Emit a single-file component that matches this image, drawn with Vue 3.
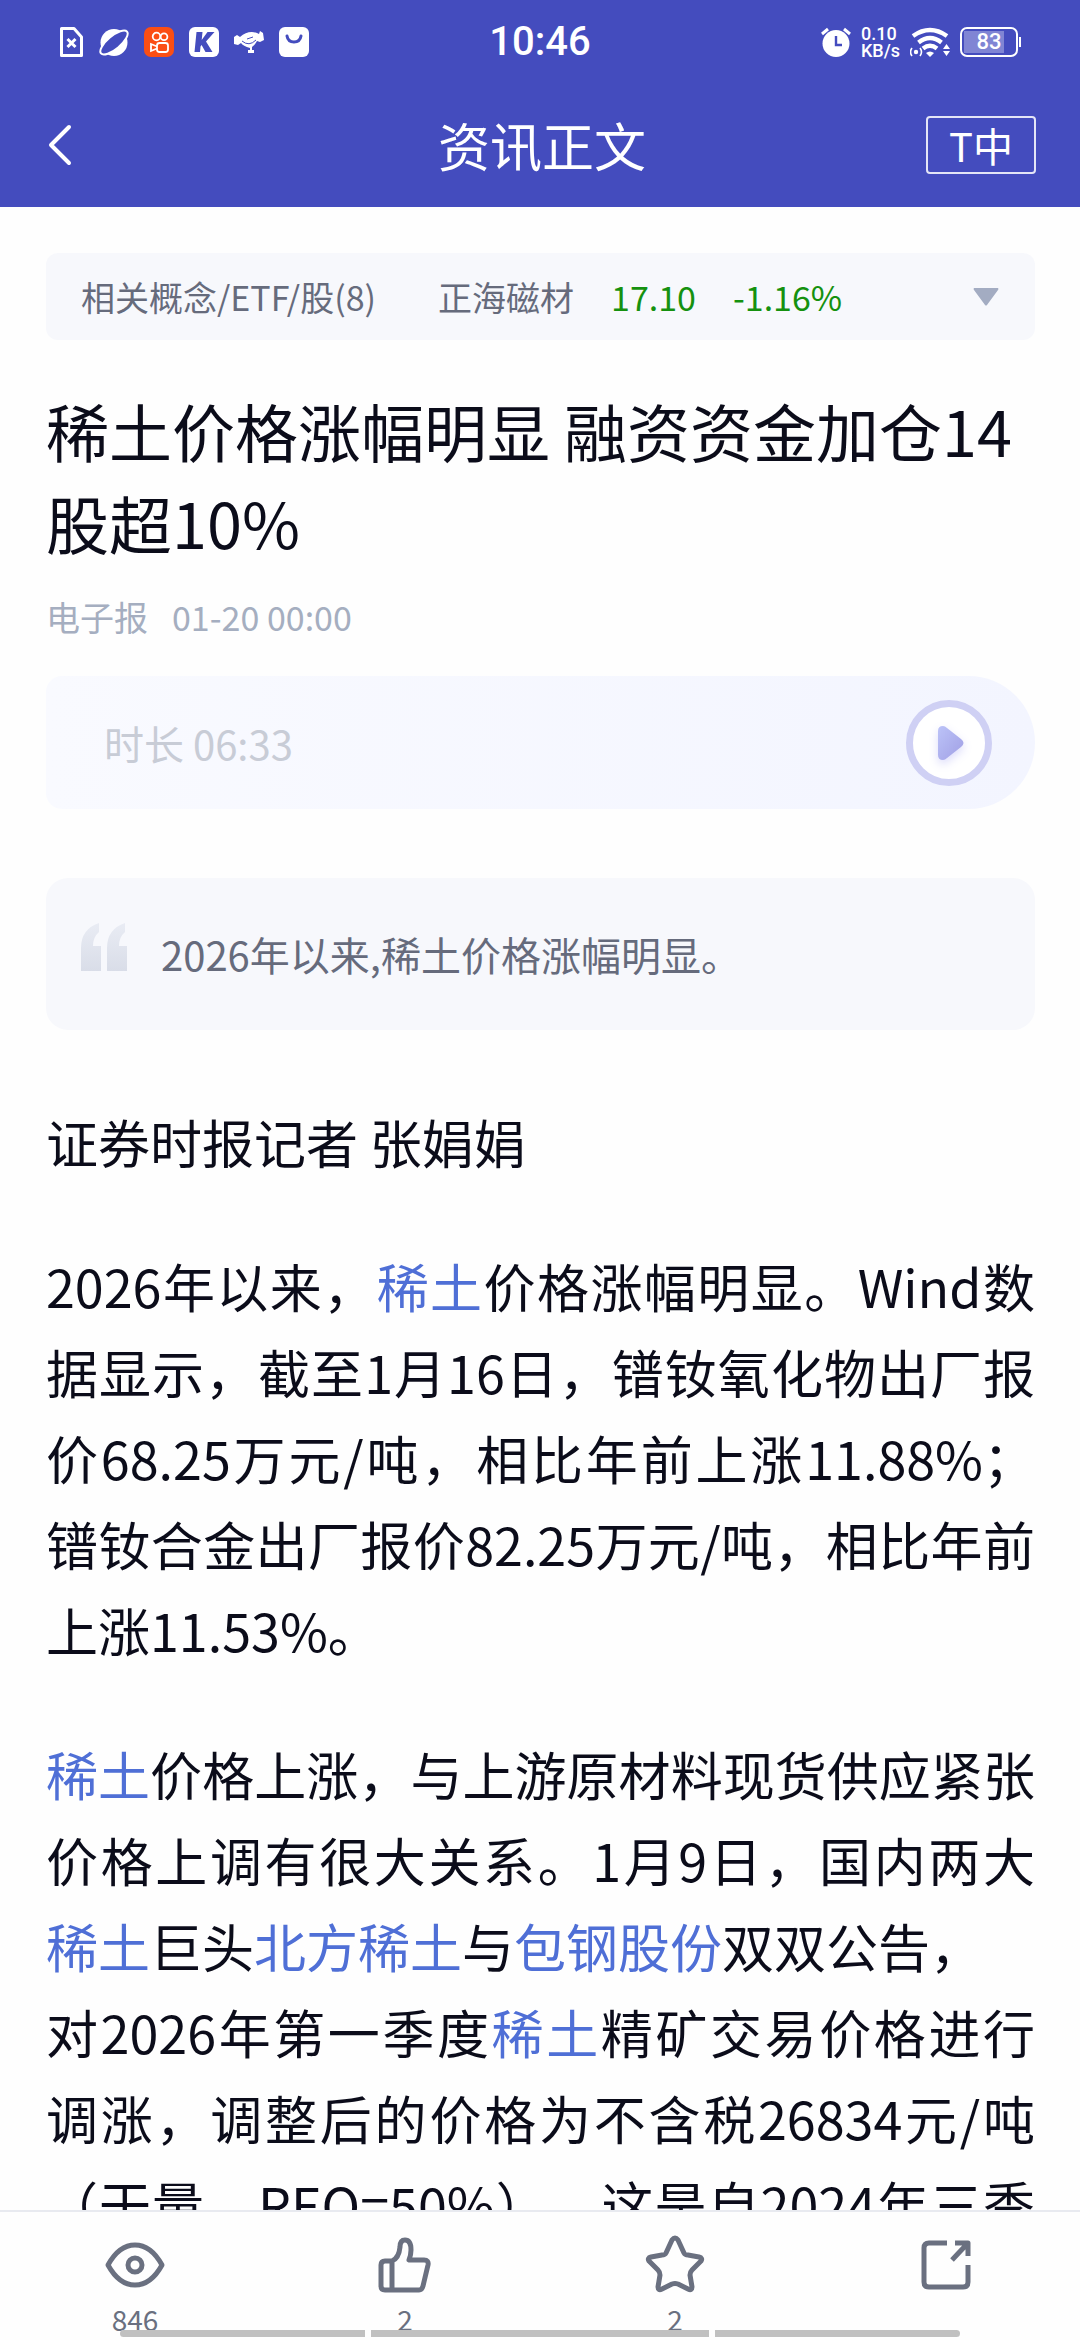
<script setup>
    import { ref } from 'vue';
    //字體大小設定
    const fontBtn = ref("T中");
    //相關股票
    const stock = ref({ name: "正海磁材", price: "17.10", change: "-1.16%" });
    //內文，link 代表可點擊的關鍵字
    const paragraphs = ref([
        [{ text: "证券时报记者 张娟娟" }],
        [
            { text: "2026年以来，" },
            { text: "稀土", link: true },
            { text: "价格涨幅明显。Wind数据显示，截至1月16日，镨钕氧化物出厂报价68.25万元/吨，相比年前上涨11.88%；镨钕合金出厂报价82.25万元/吨，相比年前上涨11.53%。" }
        ],
        [
            { text: "稀土", link: true },
            { text: "价格上涨，与上游原材料现货供应紧张价格上调有很大关系。1月9日，国内两大" },
            { text: "稀土", link: true },
            { text: "巨头" },
            { text: "北方稀土", link: true },
            { text: "与" },
            { text: "包钢股份", link: true },
            { text: "双双公告，", br: true },
            { text: "对2026年第一季度" },
            { text: "稀土", link: true },
            { text: "精矿交易价格进行调涨，调整后的价格为不含税26834元/吨（干量，REO=50%），这是自2024年三季度" }
        ]
    ]);
</script>
<template>
    <div class="page">
        <header class="header">
            <div class="status">
                <div class="statusLeft">
                    <svg viewBox="0 0 30 30">
                        <path d="M7.500 1.500H20L27.500 10V28.500H7.500Z" fill="none" stroke="#fff" stroke-width="3" stroke-linejoin="round" />
                        <path d="M13.500 12l8 8M21.500 12l-8 8" stroke="#fff" stroke-width="3" />
                    </svg>
                    <svg viewBox="0 0 30 30">
                        <circle cx="15" cy="15.500" r="13.500" fill="#fff" />
                        <ellipse cx="15" cy="15.500" rx="17" ry="6.500" transform="rotate(-40 15 15.500)" fill="#444cbe" stroke="#fff" stroke-width="2" />
                    </svg>
                    <svg viewBox="0 0 30 30">
                        <rect width="30" height="30" rx="7" fill="#fb4e14" />
                        <g fill="none" stroke="#fff" stroke-width="1.800">
                            <circle cx="12.500" cy="9.500" r="3.800" />
                            <circle cx="20" cy="9.800" r="3.400" />
                            <rect x="13" y="16" width="11" height="9" rx="2.500" />
                            <path d="M13 19.500L7 17v7l6-2.500" />
                        </g>
                    </svg>
                    <svg viewBox="0 0 30 30">
                        <rect width="30" height="30" rx="6" fill="#fff" />
                        <path d="M7.500 5H13.500L12.700 13L18.500 5H25.500L17 14.500L23.500 25H16.500L12.600 18L11.500 19.500L11 25H5.500Z" fill="#444cbe" />
                    </svg>
                    <svg viewBox="0 0 30 30">
                        <path d="M0 10L3 8L6 10Q14 3 23 6L25 7L26 4L29 6L30 13L26 15L23 14Q21 18 18 20V23H20V26H14V23H16V21Q9 19 7 16L4 18L0 17Z" fill="#fff" />
                        <path d="M8 14Q15 20 22 13M13 12L19 10" fill="none" stroke="#444cbe" stroke-width="1" />
                    </svg>
                    <svg viewBox="0 0 30 30">
                        <rect width="30" height="30" rx="6" fill="#fff" />
                        <path d="M8 9q1 6 7 6t7-6" fill="none" stroke="#444cbe" stroke-width="3" stroke-linecap="round" />
                    </svg>
                </div>
                <div class="clock">10:46</div>
                <div class="statusRight">
                    <svg class="alarm" viewBox="0 0 30 30">
                        <circle cx="15" cy="16.500" r="13.500" fill="#fff" />
                        <path d="M1 7l6-5M29 7l-6-5" stroke="#fff" stroke-width="3" />
                        <path d="M15 9v9h6" fill="none" stroke="#444cbe" stroke-width="2.400" />
                    </svg>
                    <div class="speed"><span>0.10</span><span>KB/s</span></div>
                    <svg class="wifi" viewBox="0 0 40 30">
                        <g fill="none" stroke="#fff" stroke-width="4.400">
                            <path d="M3 9Q20-3 37 9" />
                            <path d="M8.500 15.500Q20 6.500 31.500 15.500" />
                            <path d="M13 21.500Q20 16 27 21.500" />
                        </g>
                        <path d="M16 26q4-3 8 0l-4 4z" fill="#fff" />
                        <circle cx="6" cy="25" r="2.200" fill="#fff" />
                        <path d="M2 21q-3 4 0 8M10 21q3 4 0 8" fill="none" stroke="#fff" stroke-width="1.600" />
                        <path d="M33 22l3.500-5 3.500 5zM33 24l3.500 5 3.500-5z" fill="#fff" />
                    </svg>
                    <div class="battery"><span>83</span></div>
                </div>
            </div>
            <nav class="nav">
                <button class="back" aria-label="返回">
                    <svg viewBox="0 0 24 42"><path d="M21 3L3 21l18 18" fill="none" stroke="#fff" stroke-width="4" stroke-linecap="round" stroke-linejoin="round" /></svg>
                </button>
                <h1 class="navTitle">资讯正文</h1>
                <button class="fontBtn">{{ fontBtn }}</button>
            </nav>
        </header>
        <main class="main">
            <button class="related">
                <span class="relatedLabel">相关概念/ETF/股(8)</span>
                <span class="stockName">{{ stock.name }}</span>
                <span class="green">{{ stock.price }}</span>
                <span class="green">{{ stock.change }}</span>
                <svg class="arrow" viewBox="0 0 26 18"><path d="M1 0h24q1 1 0 2L14 17q-1 1-2 0L1 2q-1-1 0-2z" fill="#a3acc2" /></svg>
            </button>
            <h2 class="title">稀土价格涨幅明显 融资资金加仓14股超10%</h2>
            <div class="meta"><span>电子报</span><span>01-20 00:00</span></div>
            <div class="audio">
                <span>时长 06:33</span>
                <button class="play" aria-label="播放">
                    <svg viewBox="0 0 28 38">
                        <defs>
                            <linearGradient id="playFill" x1="0" y1="0" x2="1" y2="1">
                                <stop offset="0" stop-color="#bcc3f8" />
                                <stop offset="1" stop-color="#a09fe4" />
                            </linearGradient>
                        </defs>
                        <path d="M1 7Q1 2 6 2Q8 2 10 4L24 15Q29 19 24 23L10 34Q8 36 6 36Q1 36 1 31Z" fill="url(#playFill)" />
                    </svg>
                </button>
            </div>
            <blockquote class="quote">
                <svg viewBox="0 0 46 48">
                    <defs>
                        <linearGradient id="quoteFill" x1="0" y1="0" x2="0" y2="1">
                            <stop offset="0" stop-color="#e9ecf4" />
                            <stop offset="1" stop-color="#d9dde8" />
                        </linearGradient>
                    </defs>
                    <path d="M18 0v9q-6 5-6 14h8v25H0V25Q0 6 18 0zM44 0v9q-6 5-6 14h8v25H26V25Q26 6 44 0z" fill="url(#quoteFill)" />
                </svg>
                <p>2026年以来,稀土价格涨幅明显。</p>
            </blockquote>
            <article class="article">
                <p v-for="(p, i) in paragraphs" :key="i"><template v-for="(item, j) in p" :key="j"><a v-if="item.link" href="#">{{ item.text }}</a><template v-else>{{ item.text }}</template><br v-if="item.br"></template></p>
            </article>
        </main>
        <footer class="footer">
            <button class="tool" aria-label="阅读">
                <svg viewBox="0 0 60 60"><path d="M3 30Q14 10 30 10T57 30Q46 50 30 50T3 30Z" /><circle cx="30" cy="30" r="7" /></svg>
                <span>846</span>
            </button>
            <button class="tool" aria-label="点赞">
                <svg viewBox="0 0 60 60"><path d="M10 26h7Q24 23 25 12Q25 5 30 5Q36 5 36 15Q36 20 34 25H49Q54 25 53 30L48 51Q47 55 44 55H10Q6 55 6 51V30Q6 26 10 26ZM17 26v29" /></svg>
                <span>2</span>
            </button>
            <button class="tool" aria-label="收藏">
                <svg viewBox="0 0 60 60"><path d="M27 5Q30 1 33 5L39 18Q40 20 43 20L54 22Q58 23 56 26L47 35Q45 37 45 40L47 52Q47 56 43 54L33 49Q30 48 27 49L17 54Q13 56 13 52L15 40Q15 37 13 35L4 26Q2 23 6 22L17 20Q20 20 21 18Z" /></svg>
                <span>2</span>
            </button>
            <button class="tool" aria-label="分享">
                <svg viewBox="0 0 60 60"><path d="M32 8H14Q9 8 9 13V47Q9 52 14 52H48Q53 52 53 47V30M40 8H53V21M53 8L37 25" /></svg>
            </button>
            <div class="gesture"><i></i><i></i><i></i></div>
        </footer>
    </div>
</template>
<style>
    body{
        margin: 0;
        background-color: #fff;
    }
</style>
<style scoped>
    .page{
        display: flex;
        flex-direction: column;
        height: 100vh;
        background-color: #fefefe;
        color: #0b0c1a;
        font-family: "Noto Sans CJK SC", sans-serif;
    }
    button{
        margin: 0;
        padding: 0;
        border: none;
        background: none;
        color: inherit;
        font-family: inherit;
    }
    svg{
        display: block;
        flex-shrink: 0;
    }
    .header{
        flex-shrink: 0;
        background-color: #444cbe;
        color: #fff;
    }
    .status{
        display: grid;
        grid-template-columns: 1fr auto 1fr;
        align-items: center;
        height: 84px;
        padding: 0 54px;
    }
    .statusLeft{
        display: flex;
        gap: 15px;
    }
    .statusLeft svg{
        width: 30px;
        height: 30px;
    }
    .clock{
        font-family: Roboto, sans-serif;
        font-size: 40px;
        font-weight: 500;
        line-height: 40px;
    }
    .statusRight{
        display: flex;
        align-items: center;
        justify-content: flex-end;
        gap: 10px;
        padding-right: 8px;
    }
    .alarm{
        width: 30px;
        height: 30px;
    }
    .speed{
        display: flex;
        flex-direction: column;
        font-family: Roboto, sans-serif;
        font-size: 18px;
        font-weight: 500;
        line-height: 17px;
    }
    .wifi{
        width: 40px;
        height: 30px;
    }
    .battery{
        position: relative;
        box-sizing: border-box;
        width: 58px;
        height: 30px;
        border: 2px solid #fff;
        border-radius: 7px;
        background: linear-gradient(90deg, #8085d4 80%, transparent 80%) 2px 2px / 50px 22px no-repeat;
        font-family: Roboto, sans-serif;
        font-size: 22px;
        font-weight: 500;
        line-height: 26px;
        text-align: center;
    }
    .battery::after{
        content: "";
        position: absolute;
        right: -5px;
        top: 8px;
        width: 2px;
        height: 10px;
        background-color: #fff;
    }
    .nav{
        display: grid;
        grid-template-columns: 1fr auto 1fr;
        align-items: center;
        box-sizing: border-box;
        height: 123px;
        padding: 0 44px 2px 48px;
    }
    .back{
        justify-self: start;
    }
    .back svg{
        width: 24px;
        height: 42px;
    }
    .navTitle{
        margin: 0;
        font-size: 52px;
        font-weight: 400;
        line-height: 76px;
    }
    .fontBtn{
        justify-self: end;
        box-sizing: border-box;
        width: 110px;
        height: 58px;
        border: 2px solid #e4e5f7;
        border-radius: 4px;
        font-size: 40px;
        line-height: 54px;
    }
    .main{
        flex: 1;
        min-height: 0;
        overflow-y: auto;
        scrollbar-width: none;
        padding: 46px 45px 0 46px;
    }
    .related{
        display: flex;
        align-items: center;
        width: 100%;
        height: 87px;
        padding: 0 36px 0 35px;
        border-radius: 12px;
        background-color: #f7f8fc;
        color: #666b7c;
        font-size: 34px;
    }
    .stockName{
        margin-left: 62px;
    }
    .green{
        margin-left: 37px;
        color: #15910f;
    }
    .arrow{
        width: 26px;
        height: 18px;
        margin-left: auto;
    }
    .title{
        margin: 44px 0 24px;
        font-size: 63px;
        font-weight: 400;
        line-height: 92px;
    }
    .meta{
        display: flex;
        gap: 24px;
        color: #a5aec0;
        font-size: 34px;
        line-height: 50px;
    }
    .audio{
        display: flex;
        align-items: center;
        justify-content: space-between;
        height: 133px;
        margin-top: 34px;
        padding: 0 43px 0 58px;
        border-radius: 16px 67px 67px 16px;
        background: linear-gradient(90deg, #f9faff, #f3f5ff);
        color: #c8ccd6;
        font-size: 40px;
    }
    .play{
        display: flex;
        align-items: center;
        justify-content: center;
        box-sizing: border-box;
        width: 86px;
        height: 86px;
        border: 7px solid #cfd0f4;
        border-radius: 50%;
        background-color: #fff;
    }
    .play svg{
        width: 28px;
        height: 38px;
        margin-left: 4px;
        filter: drop-shadow(0 4px 5px #dcdcfb);
    }
    .quote{
        display: flex;
        align-items: center;
        gap: 34px;
        height: 152px;
        margin: 69px 0 69px;
        padding: 0 35px;
        border-radius: 22px;
        background-color: #f7f8fc;
        color: #666b7c;
        font-size: 40px;
    }
    .quote svg{
        width: 46px;
        height: 48px;
        margin-bottom: 14px;
    }
    .quote p{
        margin: 0;
    }
    .article{
        font-size: 52px;
        line-height: 86px;
        text-align: justify;
        text-spacing-trim: space-all;
    }
    .article p{
        margin: 0 0 58px;
    }
    .article a{
        color: #4f6fd6;
        text-decoration: none;
    }
    .footer{
        position: relative;
        flex-shrink: 0;
        display: grid;
        grid-template-columns: repeat(4, 1fr);
        height: 128px;
        border-top: 2px solid #e8eaf0;
        background-color: #fefefe;
    }
    .tool{
        display: flex;
        flex-direction: column;
        align-items: center;
        justify-content: flex-start;
        padding-top: 23px;
        color: #6a7080;
        font-size: 28px;
        line-height: 40px;
    }
    .tool svg{
        width: 60px;
        height: 60px;
        margin-bottom: 4px;
        fill: none;
        stroke: #6a7080;
        stroke-width: 5;
        stroke-linejoin: round;
    }
    /* 系統手勢條，疊在工具列上 */
    .gesture{
        position: absolute;
        left: 120px;
        right: 120px;
        bottom: 3px;
        display: grid;
        grid-template-columns: 245fr 338fr 245fr;
        gap: 6px;
        height: 7px;
        border-radius: 4px;
        overflow: hidden;
    }
    .gesture i{
        background-color: #c0c0c0;
    }
</style>
